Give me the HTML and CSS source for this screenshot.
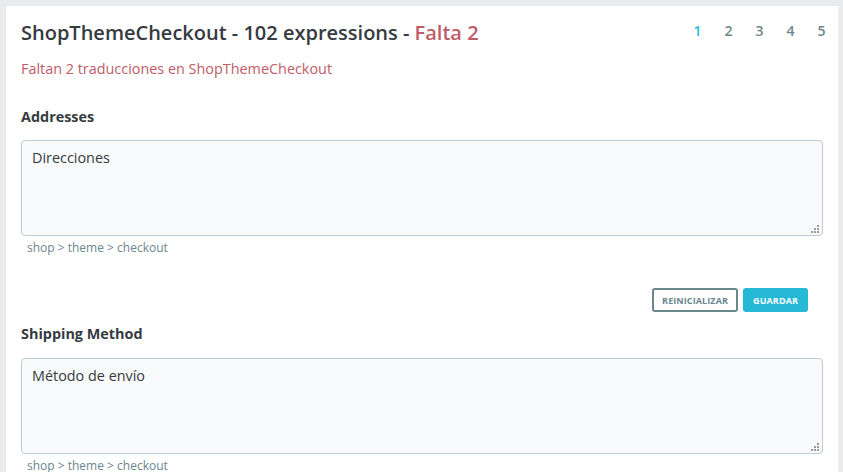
FILE: index.html
```html
<!DOCTYPE html>
<html lang="es">
<head>
<meta charset="utf-8">
<title>ShopThemeCheckout</title>
<link rel="stylesheet" href="styles.css">
</head>
<body>
<div class="panel">
  <div class="header">
    <h1 class="title">ShopThemeCheckout - 102 expressions - <span class="missing">Falta 2</span></h1>
    <nav class="pager">
      <a class="page active">1</a>
      <a class="page">2</a>
      <a class="page">3</a>
      <a class="page">4</a>
      <a class="page">5</a>
    </nav>
  </div>
  <p class="subtitle">Faltan 2 traducciones en ShopThemeCheckout</p>

  <div class="item">
    <h2 class="label">Addresses</h2>
    <div class="field-wrap">
      <textarea class="field">Direcciones</textarea>
      <svg class="grip" width="9" height="9" viewBox="0 0 9 9"><rect x="6" y="0" width="2" height="2"/><rect x="3" y="3" width="2" height="2"/><rect x="6" y="3" width="2" height="2"/><rect x="0" y="6" width="2" height="2"/><rect x="3" y="6" width="2" height="2"/><rect x="6" y="6" width="2" height="2"/></svg>
    </div>
    <div class="crumb">shop &gt; theme &gt; checkout</div>
  </div>

  <div class="actions">
    <button class="btn btn-outline">Reinicializar</button>
    <button class="btn btn-primary">Guardar</button>
  </div>

  <div class="item">
    <h2 class="label label-tight">Shipping Method</h2>
    <div class="field-wrap">
      <textarea class="field">Método de envío</textarea>
      <svg class="grip" width="9" height="9" viewBox="0 0 9 9"><rect x="6" y="0" width="2" height="2"/><rect x="3" y="3" width="2" height="2"/><rect x="6" y="3" width="2" height="2"/><rect x="0" y="6" width="2" height="2"/><rect x="3" y="6" width="2" height="2"/><rect x="6" y="6" width="2" height="2"/></svg>
    </div>
    <div class="crumb">shop &gt; theme &gt; checkout</div>
  </div>
</div>
</body>
</html>
```

FILE: styles.css
```css
html, body {
  margin: 0;
  padding: 0;
}
body {
  background: #eaebec;
  font-family: "Open Sans", "Noto Sans", sans-serif;
  color: #363a41;
  padding: 6px 5px 0 6px;
  height: 472px;
  box-sizing: border-box;
  overflow: hidden;
}
.panel {
  background: #fff;
  padding: 15px 15px 20px 15px;
  min-height: 500px;
}
.header {
  display: flex;
  align-items: flex-start;
  justify-content: space-between;
}
.title {
  margin: 0;
  font-size: 20px;
  line-height: 24px;
  font-weight: 600;
  color: #363a41;
}
.missing {
  color: #c05c67;
}
.pager {
  display: flex;
  margin-right: -14px;
  margin-top: -2px;
}
.page {
  width: 31px;
  text-align: center;
  font-size: 14px;
  line-height: 24px;
  font-weight: 600;
  color: #6c868e;
}
.page.active {
  color: #25b9d7;
}
.subtitle {
  margin: 15px 0 0 0;
  font-size: 14.4px;
  line-height: 18px;
  color: #c05c67;
}
.item {
  display: flex;
  flex-direction: column;
}
.label {
  margin: 29px 0 13px 0;
  font-size: 14.4px;
  line-height: 20px;
  font-weight: 700;
  color: #363a41;
}
.label-tight {
  margin: 12px 0 14px 0;
}
.field-wrap {
  position: relative;
}
.field {
  display: block;
  box-sizing: border-box;
  width: 100%;
  height: 96px;
  margin: 0;
  padding: 7px 10px;
  border: 1px solid #bbcdd2;
  border-radius: 4px;
  background: #f8fafb;
  font-family: "Open Sans", "Noto Sans", sans-serif;
  font-size: 14.4px;
  line-height: 20px;
  color: #363a41;
  resize: none;
}
.grip {
  position: absolute;
  right: 3px;
  bottom: 2px;
  fill: #9a9a9a;
}
.crumb {
  margin-top: 4px;
  padding-left: 6px;
  font-size: 12px;
  line-height: 15px;
  color: #6c868e;
}
.actions {
  display: flex;
  justify-content: flex-end;
  gap: 5px;
  margin-top: 33px;
  padding-right: 15px;
}
.btn {
  box-sizing: border-box;
  height: 24px;
  padding: 0 8px;
  border: 2px solid #6c868e;
  border-radius: 3px;
  background: #fff;
  font-family: "Open Sans", "Noto Sans", sans-serif;
  font-size: 9px;
  font-weight: 700;
  letter-spacing: 0.1px;
  text-transform: uppercase;
  color: #6c868e;
}
.btn-primary {
  background: #25b9d7;
  border-color: #25b9d7;
  color: #fff;
}
```
